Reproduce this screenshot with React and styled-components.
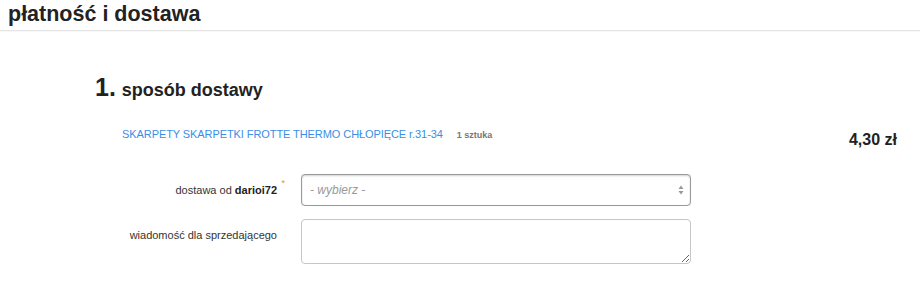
import React from "react";
import styled, { createGlobalStyle } from "styled-components";

const Global = createGlobalStyle`
  html, body { margin: 0; padding: 0; background: #fff; }
  body { font-family: "Liberation Sans", Arial, sans-serif; color: #222; }
  * { box-sizing: border-box; }
`;

const Page = styled.div`
  width: 920px;
  display: flex;
  flex-direction: column;
`;

const Header = styled.header`
  padding: 2px 8px 3px;
  border-bottom: 1px solid #e6e6e6;
  box-shadow: 0 1px 1px rgba(0, 0, 0, 0.03);
`;

const Title = styled.h1`
  margin: 0;
  font-size: 21.5px;
  line-height: 25px;
  font-weight: bold;
  color: #222;
`;

const Section = styled.section`
  display: flex;
  flex-direction: column;
  padding-top: 41px;
`;

const Heading = styled.h2`
  margin: 0 0 0 95px;
  display: flex;
  align-items: baseline;
  gap: 6px;
  line-height: 30px;
  font-weight: bold;
  color: #222;
`;

const Number = styled.span`
  font-size: 25px;
`;

const HeadingText = styled.span`
  font-size: 18px;
`;

const ProductRow = styled.div`
  display: flex;
  justify-content: space-between;
  align-items: flex-start;
  margin-top: 22px;
  padding: 0 23px 0 122px;
`;

const ProductInfo = styled.div`
  display: flex;
  align-items: baseline;
  gap: 14px;
  line-height: 14px;
`;

const ProductLink = styled.a`
  font-size: 11px;
  letter-spacing: -0.08px;
  color: #3a8ee6;
  text-decoration: none;
`;

const Quantity = styled.span`
  font-size: 9px;
  font-weight: bold;
  color: #777;
`;

const Price = styled.div`
  margin-top: 3px;
  font-size: 16px;
  line-height: 20px;
  font-weight: bold;
  color: #222;
`;

const Form = styled.div`
  display: flex;
  flex-direction: column;
  gap: 13px;
  margin-top: 24px;
`;

const FormRow = styled.div`
  display: flex;
  align-items: flex-start;
  gap: 24px;
`;

const Label = styled.label`
  width: 277px;
  padding-top: 9px;
  text-align: right;
  font-size: 11px;
  line-height: 14px;
  color: #333;
`;

const LabelText = styled.span`
  position: relative;
  b { font-weight: bold; color: #222; }
`;

const Required = styled.span`
  position: absolute;
  right: -8px;
  top: -5px;
  font-size: 9px;
  line-height: 9px;
  color: #f0892a;
`;

const SelectBox = styled.div`
  width: 390px;
  height: 32px;
  display: flex;
  align-items: center;
  justify-content: space-between;
  padding: 0 6px 0 8px;
  border: 1px solid #9a9a9a;
  border-radius: 4px;
  background: #fff;
  box-shadow: inset 0 1px 2px rgba(0, 0, 0, 0.18), 0 0 1px rgba(0, 0, 0, 0.1);
`;

const Placeholder = styled.span`
  font-size: 12px;
  font-style: italic;
  color: #999;
`;

const TextArea = styled.textarea`
  width: 390px;
  height: 45px;
  border: 1px solid #c6c6c6;
  border-radius: 4px;
  font-family: "Liberation Sans", Arial, sans-serif;
  font-size: 12px;
  padding: 6px 8px;
  background: #fff;
  outline: none;
`;

const Arrows = () => (
  <svg width="6" height="10" viewBox="0 0 6 10">
    <path d="M3 0.5 L5.5 4 L0.5 4 Z" fill="#999" />
    <path d="M3 9.5 L5.5 6 L0.5 6 Z" fill="#999" />
  </svg>
);

export default function App() {
  return (
    <Page>
      <Global />
      <Header>
        <Title>płatność i dostawa</Title>
      </Header>
      <Section>
        <Heading>
          <Number>1.</Number>
          <HeadingText>sposób dostawy</HeadingText>
        </Heading>
        <ProductRow>
          <ProductInfo>
            <ProductLink href="#">
              SKARPETY SKARPETKI FROTTE THERMO CHŁOPIĘCE r.31-34
            </ProductLink>
            <Quantity>1 sztuka</Quantity>
          </ProductInfo>
          <Price>4,30 zł</Price>
        </ProductRow>
        <Form>
          <FormRow>
            <Label>
              <LabelText>
                dostawa od <b>darioi72</b>
                <Required>*</Required>
              </LabelText>
            </Label>
            <SelectBox>
              <Placeholder>- wybierz -</Placeholder>
              <Arrows />
            </SelectBox>
          </FormRow>
          <FormRow>
            <Label>
              <LabelText>wiadomość dla sprzedającego</LabelText>
            </Label>
            <TextArea />
          </FormRow>
        </Form>
      </Section>
    </Page>
  );
}
